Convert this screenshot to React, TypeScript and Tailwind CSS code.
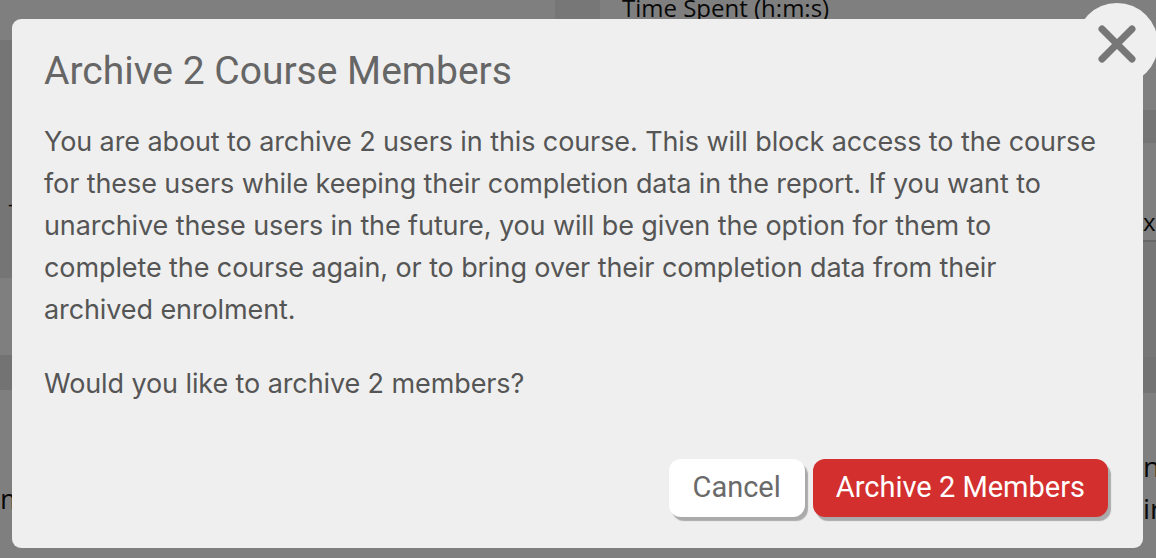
import React from "react";

function BackgroundPage() {
  return (
    <div className="flex w-full h-[558px] bg-white font-['Open_Sans',sans-serif] text-[#111]">
      {/* left column */}
      <div className="flex flex-col w-[12px] overflow-hidden">
        <div className="h-[40px] bg-white" />
        <div className="h-[238px] bg-[#ebebeb] pl-[8px] pt-[152px] text-[20px] leading-[24px]">-</div>
        <div className="h-[77px] bg-white" />
        <div className="h-[35px] bg-[#e6e6e6]" />
        <div className="flex-1 bg-white pt-[88px] text-[28px] leading-[40px]">m</div>
      </div>
      {/* middle column */}
      <div className="flex-1 flex flex-col">
        <div className="flex h-[40px]">
          <div className="w-[543px]" />
          <div className="w-[45px] bg-[#eeeeee]" />
          <div className="pl-[22px] text-[24px] leading-[24px] -mt-[4px] whitespace-nowrap">Time Spent (h:m:s)</div>
        </div>
      </div>
      {/* right column */}
      <div className="flex flex-col w-[13px] overflow-hidden">
        <div className="h-[110px] bg-white" />
        <div className="h-[33px] bg-[#ebebeb]" />
        <div className="h-[97px] bg-white flex items-center pt-[60px] text-[24px] leading-[24px] whitespace-nowrap">xp</div>
        <div className="h-[2px] bg-[#cccccc]" />
        <div className="h-[115px] bg-[#ececec]" />
        <div className="h-[36px] bg-[#e6e6e6]" />
        <div className="flex-1 flex flex-col bg-white pt-[52px] text-[28px] leading-[42px]">
          <span>n</span>
          <span>ir</span>
        </div>
      </div>
    </div>
  );
}

export default function App() {
  return (
    <div className="relative w-[1156px] h-[558px] overflow-hidden">
      <BackgroundPage />
      {/* overlay */}
      <div className="absolute inset-0 bg-black/50">
        <div className="absolute left-[12px] top-[19px] w-[1131px] h-[529px] bg-[#efefef] rounded-[9px] flex flex-col pl-[32px] pr-[35px] pt-[30px] pb-[31px]">
          <h2 className="font-['Roboto',sans-serif] text-[39px] leading-[44px] text-[#666666]">
            Archive 2 Course Members
          </h2>
          <p className="mt-[28px] -mr-[4px] font-['Inter',sans-serif] text-[27px] leading-[42px] tracking-[-0.1px] text-[#555555]">
            You are about to archive 2 users in this course. This will block access to the course for these users while
            keeping their completion data in the report. If you want to unarchive these users in the future, you will be
            given the option for them to complete the course again, or to bring over their completion data from their
            archived enrolment.
          </p>
          <p className="mt-[32px] font-['Inter',sans-serif] text-[27px] leading-[42px] tracking-[-0.1px] text-[#555555]">
            Would you like to archive 2 members?
          </p>
          <div className="mt-auto flex justify-end gap-[8px]">
            <button
              type="button"
              className="h-[58px] px-[24px] rounded-[12px] bg-white text-[#6a6a6a] font-['Roboto',sans-serif] text-[29px] shadow-[3px_4px_1px_#aaaaaa]"
            >
              Cancel
            </button>
            <button
              type="button"
              className="h-[58px] px-[23px] rounded-[12px] bg-[#d32f2f] text-white font-['Roboto',sans-serif] text-[29px] shadow-[3px_4px_1px_#aaaaaa]"
            >
              Archive 2 Members
            </button>
          </div>
        </div>
        {/* close button */}
        <button
          type="button"
          className="absolute left-[1076px] top-[3px] w-[82px] h-[82px] rounded-full bg-[#efefef] flex items-center justify-center"
        >
          <svg width="40" height="40" viewBox="0 0 40 40" fill="none" stroke="#777777" strokeWidth="7" strokeLinecap="round">
            <path d="M5 5 L35 35 M35 5 L5 35" />
          </svg>
        </button>
      </div>
    </div>
  );
}
